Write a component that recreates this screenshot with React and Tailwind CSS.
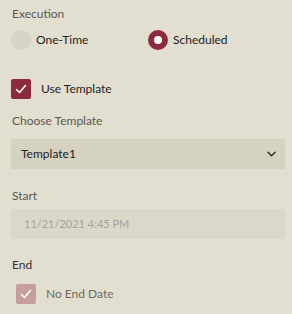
import React from "react";

const font = { fontFamily: '"Segoe UI", Lato, "Open Sans", sans-serif' };

function Check({ className }) {
  return (
    <svg viewBox="0 0 20 20" className={className} fill="none">
      <path d="M5.5 10.5 L8.5 13.5 L14.5 6.5" stroke="white" strokeWidth="1.6" strokeLinecap="round" strokeLinejoin="round" />
    </svg>
  );
}

export default function App() {
  return (
    <div className="w-[292px] h-[314px] bg-[#e2ded0] pl-[11px] pr-[7px] pt-[6px] font-['Segoe_UI',Lato,sans-serif]" style={font}>
      <div className="text-[12px] leading-[16px] text-[#5b5750] pl-[1px]">Execution</div>
      <div className="grid grid-cols-2 mt-[8px] h-[20px]">
        <div className="flex items-center">
          <div className="w-[20px] h-[20px] rounded-full bg-[#d8d4c5]" />
          <span className="ml-[5px] text-[12px] text-[#222222] leading-[20px]">One-Time</span>
        </div>
        <div className="flex items-center">
          <div className="w-[20px] h-[20px] rounded-full bg-[#8c2a3e] flex items-center justify-center">
            <div className="w-[8px] h-[8px] rounded-full bg-white" />
          </div>
          <span className="ml-[5px] text-[12px] text-[#222222] leading-[20px]">Scheduled</span>
        </div>
      </div>
      <div className="flex items-center mt-[29px] h-[20px]">
        <div className="w-[20px] h-[20px] rounded-[2px] bg-[#8c2a3e] flex items-center justify-center">
          <Check className="w-[20px] h-[20px]" />
        </div>
        <span className="ml-[10px] text-[12px] text-[#222222] leading-[20px]">Use Template</span>
      </div>
      <div className="mt-[14px] text-[12px] leading-[16px] text-[#5b5750] pl-[1px]">Choose Template</div>
      <div className="mt-[10px] h-[30px] rounded-[2px] bg-[#d6d2c0] flex items-center justify-between pl-[10px] pr-[9px]">
        <span className="text-[12px] text-[#222222]">Template1</span>
        <svg viewBox="0 0 10 6" className="w-[9px] h-[6px]" fill="none">
          <path d="M1 1 L5 5 L9 1" stroke="#222" strokeWidth="1.4" strokeLinecap="round" strokeLinejoin="round" />
        </svg>
      </div>
      <div className="mt-[19px] text-[12px] leading-[16px] text-[#5b5750] pl-[1px]">Start</div>
      <div className="mt-[5px] h-[30px] rounded-[2px] bg-[#dcd8c9] flex items-center pl-[13px]">
        <span className="text-[11px] text-[#a6a296]">11/21/2021 4:45 PM</span>
      </div>
      <div className="mt-[18px] text-[12px] leading-[16px] text-[#333333] pl-[1px]">End</div>
      <div className="flex items-center mt-[11px] h-[20px] pl-[5px]">
        <div className="w-[20px] h-[20px] rounded-[2px] bg-[#c79e9e] flex items-center justify-center">
          <Check className="w-[20px] h-[20px]" />
        </div>
        <span className="ml-[10px] text-[12px] text-[#6e6a62] leading-[20px]">No End Date</span>
      </div>
    </div>
  );
}
